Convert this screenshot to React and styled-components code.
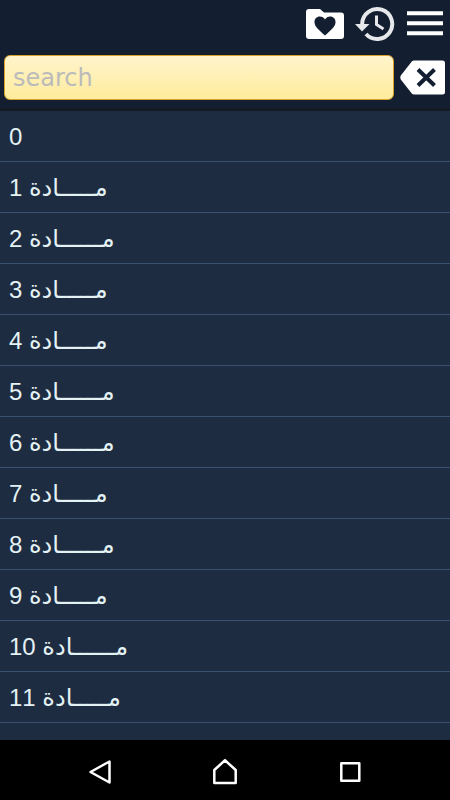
import React, { useState } from 'react';
import styled, { createGlobalStyle } from 'styled-components';

const articles = [
    '0',
    'مـــــادة 1',
    'مــــــادة 2',
    'مـــــادة 3',
    'مـــــادة 4',
    'مــــــادة 5',
    'مــــــادة 6',
    'مـــــادة 7',
    'مــــــادة 8',
    'مـــــادة 9',
    'مــــــادة 10',
    'مـــــادة 11',
]

function App() {
    const [query, setQuery] = useState('')
    const results = articles.filter(item => item.includes(query))

    return (
        <Screen>
            <GlobalStyle />
            <Header>
                <Actions>
                    <IconButton aria-label="Favorites">
                        <svg width="38" height="30" viewBox="0 0 38 30">
                            <path fill="#fff" d="M3 0h11l4 3.500h17q3 0 3 3V27q0 3-3 3H3q-3 0-3-3V3q0-3 3-3z" />
                            <path fill="#131f30" d="M19 26.500C12.500 20.500 8.500 17.500 8.500 13C8.500 9.800 10.800 7.500 13.700 7.500C16 7.500 18 8.700 19 10.500C20 8.700 22 7.500 24.300 7.500C27.200 7.500 29.500 9.800 29.500 13C29.500 17.500 25.500 20.500 19 26.500z" />
                        </svg>
                    </IconButton>
                    <IconButton aria-label="History">
                        <svg width="40" height="36" viewBox="0 0 40 36">
                            <path fill="none" stroke="#e6e8ec" strokeWidth="4" d="M7.200 19V17.500A15 15 0 1 1 11 28" />
                            <path fill="#e6e8ec" d="M0 18h14.500L7 25.500z" />
                            <path fill="none" stroke="#e6e8ec" strokeWidth="3" d="M21.500 9.500V18.500l7 4.500" />
                        </svg>
                    </IconButton>
                    <IconButton aria-label="Menu">
                        <svg width="38" height="28" viewBox="0 0 38 28">
                            <path fill="#fff" d="M1 1.200h36v4H1zM1 11.200h36v4H1zM1 21.200h36v4H1z" />
                        </svg>
                    </IconButton>
                </Actions>
                <SearchRow>
                    <SearchInput
                        aria-label="search"
                        placeholder="search"
                        value={query}
                        onChange={e => setQuery(e.target.value)}
                    />
                    <IconButton aria-label="Clear" onClick={() => setQuery('')}>
                        <svg width="46" height="36" viewBox="0 0 46 36">
                            <path fill="#fff" d="M14 .5h28.500q2.500 0 2.500 2.500v29q0 2.500-2.500 2.500H14q-2 0-3-2L.8 19.500q-1-2 0-4L11 2.500q1-2 3-2z" />
                            <path stroke="#131f30" strokeWidth="4" d="M18 9.500l16.500 16M34.500 9.500l-16.500 16" />
                        </svg>
                    </IconButton>
                </SearchRow>
            </Header>
            <List>
                {results.map(item => <Row key={item} dir="rtl">{item}</Row>)}
            </List>
            <NavBar>
                <IconButton aria-label="Back">
                    <svg width="26" height="28" viewBox="0 0 26 28">
                        <path fill="none" stroke="#fff" strokeWidth="2.500" strokeLinejoin="round" d="M22.500 3.500v21L3.500 14z" />
                    </svg>
                </IconButton>
                <IconButton aria-label="Home">
                    <svg width="26" height="28" viewBox="0 0 26 28">
                        <path fill="none" stroke="#fff" strokeWidth="2.500" strokeLinejoin="round" d="M2.300 25V12L13 2.300L23.700 12V25z" />
                    </svg>
                </IconButton>
                <IconButton aria-label="Recent apps">
                    <svg width="26" height="28" viewBox="0 0 26 28">
                        <path fill="none" stroke="#fff" strokeWidth="2.500" strokeLinejoin="round" d="M4.300 5.300h18v17.500h-18z" />
                    </svg>
                </IconButton>
            </NavBar>
        </Screen>
    )
}

export default App

const GlobalStyle = createGlobalStyle`
    body{
        margin: 0;
        background: #1d2c41;
    }
    *{
        box-sizing: border-box;
    }
`
const Screen = styled.div`
    display: flex;
    flex-direction: column;
    min-height: 100vh;
    background: #1d2c41;
    font-family: "Liberation Sans", "DejaVu Sans", sans-serif;
`
const Header = styled.header`
    flex: none;
    padding: 4px 4px 8px;
    background: #131f30;
    border-bottom: 3px solid #151b25;
`
const Actions = styled.div`
    display: flex;
    align-items: center;
    justify-content: flex-end;
    gap: 11px;
    height: 40px;
    padding-right: 2px;
`
const IconButton = styled.button`
    display: flex;
    padding: 0;
    border: 0;
    background: none;
    cursor: pointer;
`
const SearchRow = styled.div`
    display: flex;
    align-items: center;
    gap: 6px;
    padding-top: 11px;
`
const SearchInput = styled.input`
    flex: 1;
    min-width: 0;
    height: 45px;
    padding: 0 8px;
    border: 1px solid #d8a02c;
    border-radius: 6px;
    background: linear-gradient(#fff4cc, #ffec9c);
    color: #222;
    font-family: "DejaVu Sans", sans-serif;
    font-size: 24px;
    outline: none;
    &::placeholder{
        color: #bbb;
        opacity: 1;
    }
`
const List = styled.ul`
    flex: 1;
    margin: 0;
    padding: 0;
    list-style: none;
`
const Row = styled.li`
    height: 51px;
    padding: 0 9px;
    border-bottom: 1px solid #3a5070;
    color: #e4f2f4;
    font-size: 24px;
    font-kerning: none;
    line-height: 52px;
    text-align: left;
`
const NavBar = styled.nav`
    flex: none;
    display: flex;
    align-items: center;
    justify-content: space-around;
    height: 60px;
    padding: 4px 37px 0;
    background: #000;
`
